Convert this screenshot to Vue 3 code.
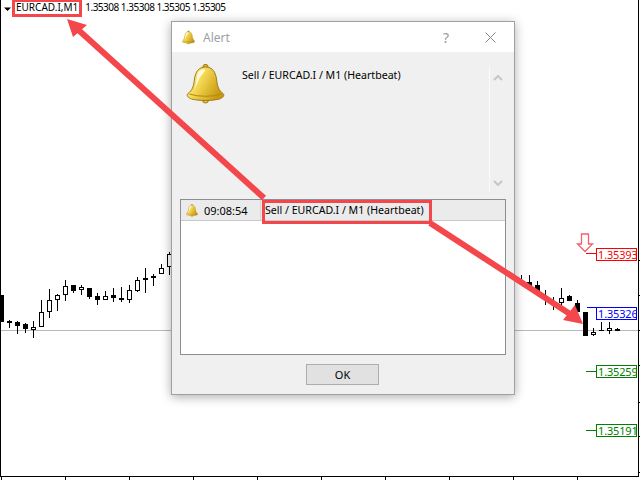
<template>
  <div class="screen">
    <svg class="layer" width="640" height="480">
      <defs>
        <linearGradient id="bellFill" x1="0" y1="0" x2="1" y2="0.5">
          <stop offset="0" stop-color="#fff6b0" />
          <stop offset="0.45" stop-color="#f5d955" />
          <stop offset="1" stop-color="#c99a10" />
        </linearGradient>
        <symbol id="bell" viewBox="0 0 38 40">
          <circle cx="19" cy="36" r="3" fill="#e6c040" stroke="#a07c18" />
          <rect x="16.5" y="0.5" width="5" height="4" rx="2" fill="#d9b030" stroke="#a07c18" />
          <path
            d="M19 3C26 3 29 8 30 15C31 23 32 26 37 30C38 32 36 34 33 35C25 37 13 37 5 35C2 34 0 32 1 30C6 26 7 23 8 15C9 8 12 3 19 3Z"
            fill="url(#bellFill)"
            stroke="#a07c18"
          />
          <path d="M3 30C12 33 26 33 35 30" fill="none" stroke="#b08a18" stroke-width="1.2" />
          <path d="M12 8C10 12 10 20 8 26L13 14L19 6C16 5 14 6 12 8Z" fill="#fffbe0" />
        </symbol>
      </defs>

      <!-- crosshair line and axes -->
      <rect x="0" y="330" width="638" height="1" fill="#b9b9b9" />
      <rect x="0" y="0" width="1" height="477" fill="#000" />
      <rect x="638" y="0" width="1" height="477" fill="#000" />
      <rect x="0" y="476" width="639" height="1" fill="#000" />
      <rect v-for="y in priceTicks" :key="'p' + y" x="639" :y="y" width="1" height="1" fill="#000" />
      <rect v-for="x in timeTicks" :key="'t' + x" :x="x" y="477" width="1" height="3" fill="#000" />

      <!-- candles -->
      <g v-for="c in candles" :key="c[0]">
        <rect :x="c[0]" :y="c[1]" width="1" :height="c[2] - c[1]" fill="#000" />
        <rect
          v-if="c[5]"
          :x="c[0] - 2"
          :y="c[3]"
          width="5"
          :height="c[4] - c[3]"
          fill="#000"
        />
        <rect
          v-else
          :x="c[0] - 1.5"
          :y="c[3] + 0.5"
          width="4"
          :height="c[4] - c[3] - 1"
          fill="#fff"
          stroke="#000"
        />
      </g>
      <rect x="0" y="295" width="4" height="27" fill="#000" />

      <!-- sell arrow -->
      <path d="M581.5 234V244H577.5L585 251.5L592.5 244H588.5V234Z" fill="#fff" stroke="#f4606a" stroke-width="1.3" />
      <path d="M4 7.500H11L7.500 11Z" fill="#000" />

      <!-- level stubs -->
      <rect x="586" y="253" width="10" height="1" fill="#f00" />
      <rect x="587" y="307" width="9" height="1" fill="#00f" />
      <rect x="586" y="371" width="10" height="1" fill="#008000" />
      <rect x="586" y="430" width="10" height="1" fill="#008000" />
    </svg>

    <div class="ohlc">
      <span class="symbol">EURCAD.I,M1</span>
      <span class="prices">1.35308 1.35308 1.35305 1.35305</span>
    </div>

    <div
      v-for="l in levels"
      :key="l.text"
      class="level"
      :style="{ top: l.top + 'px', color: l.color, borderColor: l.color }"
    >
      {{ l.text }}
    </div>

    <div class="dialog">
      <div class="titlebar">
        <svg class="title-bell" width="13" height="15"><use href="#bell" /></svg>
        <span class="title">Alert</span>
        <span class="help">?</span>
        <svg class="close" width="11" height="11" viewBox="0 0 11 11">
          <path d="M0.500 0.500L10.500 10.500M10.500 0.500L0.500 10.500" stroke="#8a8a8a" fill="none" />
        </svg>
      </div>
      <div class="body">
        <div class="message">
          <svg class="big-bell" width="39" height="40"><use href="#bell" /></svg>
          <p class="message-text">Sell / EURCAD.I / M1 (Heartbeat)</p>
          <div class="scroll">
            <svg width="10" height="6" viewBox="0 0 10 6">
              <path d="M1 5L5 1L9 5" fill="none" stroke="#c6c6c6" stroke-width="2" />
            </svg>
            <svg width="10" height="6" viewBox="0 0 10 6">
              <path d="M1 1L5 5L9 1" fill="none" stroke="#c6c6c6" stroke-width="2" />
            </svg>
          </div>
        </div>
        <div class="list">
          <div class="list-head">
            <div class="col-time">
              <svg width="12" height="15"><use href="#bell" /></svg>
              <span>09:08:54</span>
            </div>
            <div class="col-text">Sell / EURCAD.I / M1 (Heartbeat)</div>
          </div>
        </div>
        <div class="actions">
          <button class="ok">OK</button>
        </div>
      </div>
    </div>

    <!-- callouts drawn on top of the screenshot -->
    <svg class="layer top" width="640" height="480">
      <g fill="none" stroke="#f4474c" stroke-width="3">
        <rect x="13.500" y="0.500" width="67" height="15" />
        <rect x="263.500" y="201.500" width="167" height="21" />
      </g>
      <path d="M264 198L74 26" stroke="#f4474c" stroke-width="6" />
      <path d="M67 19L87 25L73 37Z" fill="#f4474c" />
      <path d="M430 223L570 314" stroke="#f4474c" stroke-width="6" />
      <path d="M583 324L563 320L575 305Z" fill="#f4474c" />
    </svg>
  </div>
</template>

<script setup>
// x, wick top, wick bottom, body top, body bottom, filled
const candles = [
  [9, 320, 328, 321, 323, 1],
  [17, 321, 334, 322, 326, 1],
  [25, 323, 333, 324, 329, 1],
  [33, 321, 338, 327, 330, 0],
  [41, 300, 327, 312, 327, 0],
  [49, 289, 318, 300, 312, 0],
  [57, 294, 311, 295, 300, 0],
  [65, 280, 301, 286, 295, 0],
  [73, 285, 293, 285, 291, 1],
  [81, 285, 295, 287, 290, 0],
  [89, 288, 299, 288, 297, 1],
  [97, 293, 305, 296, 300, 1],
  [105, 291, 300, 296, 300, 0],
  [113, 288, 302, 295, 298, 1],
  [121, 287, 302, 298, 300, 1],
  [129, 285, 303, 290, 300, 0],
  [137, 277, 292, 280, 291, 0],
  [145, 268, 293, 278, 280, 0],
  [153, 274, 286, 276, 278, 0],
  [161, 264, 274, 268, 274, 0],
  [169, 252, 275, 254, 267, 0],
  [521, 275, 285, 282, 284, 1],
  [529, 275, 290, 282, 286, 1],
  [537, 281, 295, 285, 291, 1],
  [545, 290, 305, 296, 300, 1],
  [553, 297, 310, 302, 305, 1],
  [561, 288, 310, 298, 303, 0],
  [569, 295, 301, 296, 301, 1],
  [577, 300, 313, 303, 312, 1],
  [585, 312, 336, 312, 336, 1],
  [593, 328, 336, 332, 335, 0],
  [601, 322, 331, 330, 331, 1],
  [609, 322, 334, 328, 331, 0],
  [617, 328, 331, 329, 331, 1],
]

const levels = [
  { text: '1.35393', top: 248, color: '#f00' },
  { text: '1.35326', top: 307, color: '#00f' },
  { text: '1.35259', top: 365, color: '#008000' },
  { text: '1.35191', top: 424, color: '#008000' },
]

const priceTicks = [260, 295, 330, 365, 402, 436, 472]
const timeTicks = [1, 65, 129, 193, 257, 321, 385, 449, 513, 577]
</script>

<style>
html,
body {
  margin: 0;
  background: #fff;
}
</style>

<style scoped>
.screen {
  position: relative;
  width: 640px;
  height: 480px;
  overflow: hidden;
  background: #fff;
  font-family: "Noto Sans", "Liberation Sans", sans-serif;
  color: #000;
}

.layer {
  position: absolute;
  left: 0;
  top: 0;
  display: block;
}

.top {
  z-index: 5;
  pointer-events: none;
}

.ohlc {
  position: absolute;
  left: 16px;
  top: 0;
  height: 15px;
  display: flex;
  gap: 7px;
  align-items: center;
  font-size: 10px;
  line-height: 15px;
  white-space: nowrap;
}

.prices {
  letter-spacing: -0.5px;
}

.level {
  position: absolute;
  left: 596px;
  width: 38px;
  height: 11px;
  border: 1px solid;
  font-size: 11px;
  line-height: 11px;
  letter-spacing: -0.15px;
  padding-left: 1px;
  white-space: nowrap;
  overflow: hidden;
}

.dialog {
  position: absolute;
  left: 171px;
  top: 21px;
  width: 344px;
  height: 374px;
  box-sizing: border-box;
  border: 1px solid #a0a0a0;
  background: #f0f0f0;
  box-shadow: 0 2px 10px rgba(0, 0, 0, 0.32);
  display: flex;
  flex-direction: column;
}

.titlebar {
  height: 30px;
  flex: none;
  background: #fff;
  display: flex;
  align-items: center;
  padding: 0 18px 0 10px;
}

.title-bell {
  margin-right: 8px;
}

.title {
  font-size: 12px;
  color: #9a9fa6;
  flex: 1;
}

.help {
  font-size: 14px;
  color: #9a9a9a;
  margin-right: 36px;
}

.body {
  flex: 1;
  display: flex;
  flex-direction: column;
  padding: 0 8px;
  min-height: 0;
}

.message {
  height: 147px;
  flex: none;
  display: flex;
  align-items: flex-start;
}

.big-bell {
  margin: 12px 0 0 6px;
  flex: none;
}

.message-text {
  margin: 16px 0 0 17px;
  font-size: 10.6px;
  line-height: 15px;
  flex: 1;
  white-space: nowrap;
}

.scroll {
  flex: none;
  width: 17px;
  height: 125px;
  margin-top: 15px;
  border-left: 1px solid #fbfbfb;
  display: flex;
  flex-direction: column;
  justify-content: space-between;
  align-items: center;
  padding: 8px 0 6px;
  box-sizing: border-box;
}

.list {
  height: 156px;
  flex: none;
  box-sizing: border-box;
  border: 1px solid #8c8c96;
  background: #fff;
}

.list-head {
  height: 21px;
  display: flex;
  align-items: center;
  background: #ebebeb;
  border-bottom: 1px solid #c9c9c9;
  font-size: 10.6px;
  box-sizing: border-box;
}

.col-time {
  width: 80px;
  height: 100%;
  box-sizing: border-box;
  border-right: 1px solid #d6d6d6;
  display: flex;
  align-items: center;
  gap: 6px;
  padding-left: 5px;
  font-size: 11px;
}

.col-text {
  padding-left: 4px;
  white-space: nowrap;
}

.actions {
  flex: 1;
  display: flex;
  justify-content: center;
  padding: 9px 1px 0 0;
}

.ok {
  width: 73px;
  height: 21px;
  box-sizing: border-box;
  border: 1px solid #adadad;
  background: #e1e1e1;
  font-family: inherit;
  font-size: 11px;
  color: #000;
  padding: 0;
}
</style>
